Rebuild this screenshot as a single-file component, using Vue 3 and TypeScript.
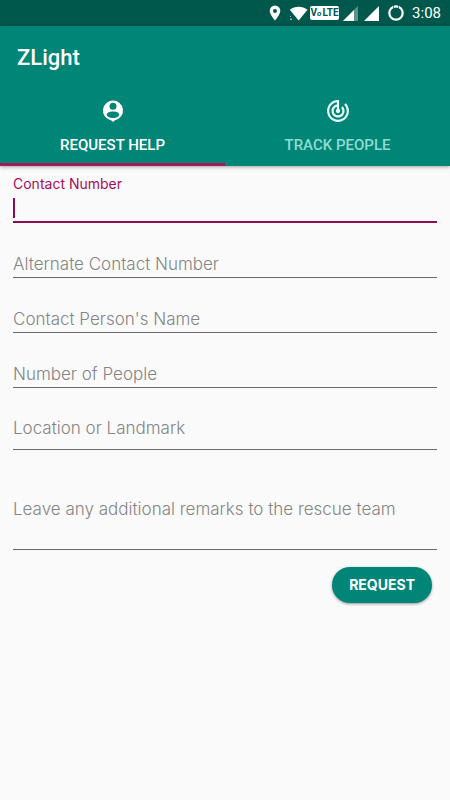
<script setup lang="ts">
import { ref } from 'vue'

type FieldKind = 'line' | 'location' | 'remarks'

interface Field {
  id: string
  label: string
  kind: FieldKind
  type: string
}

const fields: Field[] = [
  { id: 'alternate', label: 'Alternate Contact Number', kind: 'line', type: 'tel' },
  { id: 'name', label: "Contact Person's Name", kind: 'line', type: 'text' },
  { id: 'people', label: 'Number of People', kind: 'line', type: 'text' },
  { id: 'location', label: 'Location or Landmark', kind: 'location', type: 'text' },
  { id: 'remarks', label: 'Leave any additional remarks to the rescue team', kind: 'remarks', type: 'text' },
]

const contact = ref('')
const values = ref<Record<string, string>>({
  alternate: '',
  name: '',
  people: '',
  location: '',
  remarks: '',
})
</script>

<template>
  <div class="app">
    <div class="status">
      <svg class="pin" viewBox="0 0 12 16" width="12" height="16">
        <path fill="#fff" fill-rule="evenodd" d="M6 0.5a5.3 5.3 0 0 0-5.3 5.3C.7 9.600 6 15.500 6 15.500s5.300-5.900 5.300-9.700A5.300 5.300 0 0 0 6 .5zM6 3.900a2 2 0 1 1 0 4 2 2 0 0 1 0-4z" />
      </svg>
      <svg class="wifi" viewBox="0 0 19 15" width="19" height="15">
        <path fill="#fff" d="M.8 3.800C5.800-.2 13.500-.2 18.500 3.800L9.700 14.500z" />
        <path fill="#8fb8b2" d="M1 10h1v1H1zM1 12.500h2v1.500H1z" />
      </svg>
      <span class="volte">V<i>o</i>&#8202;LTE</span>
      <svg class="signal" viewBox="0 0 15 15" width="15" height="15">
        <path fill="#5d938b" d="M15 0v15H0z" />
        <path fill="#fff" d="M11 4v11H0z" />
      </svg>
      <svg class="signal-full" viewBox="0 0 15 15" width="15" height="15">
        <path fill="#fff" d="M15 0v15H0z" />
      </svg>
      <svg class="ring" viewBox="0 0 16 16" width="16" height="16">
        <circle cx="8" cy="8" r="6.700" fill="none" stroke="#fff" stroke-width="2.200" />
        <path d="M5.500 0v3.500M10.500 0v3.500" stroke="#00574b" stroke-width=".7" />
      </svg>
      <span class="clock">3:08</span>
    </div>

    <header class="bar">
      <h1 class="title">ZLight</h1>
      <nav class="tabs">
        <button class="tab active" type="button">
          <svg viewBox="0 0 24 24" width="24" height="24">
            <path fill="#fff" fill-rule="evenodd" d="M12 1.500a10 10 0 0 0-3 19.540c1.200.4 2.200.9 3 2.160.8-1.260 1.800-1.760 3-2.160A10 10 0 0 0 12 1.500zM12 3.700a3.500 3.500 0 1 1 0 7 3.500 3.500 0 0 1 0-7zM12 12.400c3.300 0 6.200 1.100 6.200 3.100 0 2-2.900 3.500-6.200 3.500s-6.200-1.500-6.200-3.500c0-2 2.900-3.100 6.200-3.100z" />
          </svg>
          <span>REQUEST HELP</span>
        </button>
        <button class="tab" type="button">
          <svg viewBox="1 1 22 22" width="24" height="24">
            <path fill="#e6fffb" d="M19.070 4.930l-1.410 1.410C19.100 7.790 20 9.790 20 12c0 4.420-3.580 8-8 8s-8-3.580-8-8c0-4.080 3.050-7.440 7-7.930v2.020C8.160 6.570 6 9.030 6 12c0 3.310 2.690 6 6 6s6-2.690 6-6c0-1.660-.67-3.160-1.760-4.240l-1.410 1.410C15.550 9.900 16 10.900 16 12c0 2.210-1.790 4-4 4s-4-1.790-4-4c0-1.860 1.280-3.410 3-3.860v2.140c-.6.350-1 .98-1 1.720 0 1.100.9 2 2 2s2-.9 2-2c0-.74-.4-1.380-1-1.720V2h-1C6.480 2 2 6.480 2 12s4.480 10 10 10 10-4.480 10-10c0-2.760-1.120-5.260-2.930-7.070z" />
          </svg>
          <span>TRACK PEOPLE</span>
        </button>
      </nav>
    </header>

    <form class="form" @submit.prevent>
      <div class="focused">
        <label for="contact">Contact Number</label>
        <input id="contact" v-model="contact" type="tel" :class="{ empty: !contact }" />
      </div>
      <div v-for="field in fields" :key="field.id" class="field" :class="field.kind">
        <label v-show="!values[field.id]" :for="field.id">{{ field.label }}</label>
        <textarea v-if="field.kind === 'remarks'" :id="field.id" v-model="values[field.id]"></textarea>
        <input v-else :id="field.id" v-model="values[field.id]" :type="field.type" />
      </div>
      <button class="submit" type="submit">REQUEST</button>
    </form>
  </div>
</template>

<style>
body {
  margin: 0;
  background: #fafafa;
}
</style>

<style scoped>
.app {
  min-height: 100vh;
  background: #fafafa;
  font-family: Inter, sans-serif;
}

.status {
  display: flex;
  align-items: center;
  justify-content: flex-end;
  height: 26px;
  padding-right: 9px;
  background: #00574b;
  color: #fff;
}

.wifi {
  margin-left: 8px;
}

.volte {
  box-sizing: border-box;
  width: 29px;
  height: 14px;
  margin-left: 2px;
  border-radius: 2px;
  background: #fff;
  color: #00574b;
  font: 700 10px/14px Roboto, sans-serif;
  text-align: center;
  white-space: nowrap;
}

.volte i {
  font-size: 8px;
}

.signal {
  margin-left: 4px;
}

.signal-full {
  margin-left: 6px;
}

.ring {
  margin-left: 9px;
}

.clock {
  margin-left: 8px;
  font: 400 15px/26px Roboto, sans-serif;
}

.bar {
  position: relative;
  background: #008577;
  box-shadow: 0 1px 4px rgba(0, 0, 0, 0.35);
}

.title {
  margin: 0;
  padding: 0 17px;
  color: #fff;
  font: 500 22px/64px Roboto, sans-serif;
}

.tabs {
  display: grid;
  grid-template-columns: 1fr 1fr;
}

.tab {
  display: flex;
  flex-direction: column;
  align-items: center;
  gap: 10px;
  height: 76px;
  padding: 9px 0 0;
  border: 0;
  border-bottom: 3px solid transparent;
  background: none;
  color: #8fdcd2;
  font: 500 15px/24px Roboto, sans-serif;
}

.tab.active {
  border-bottom-color: #a21b5b;
  color: #fff;
}

.form {
  display: flex;
  flex-direction: column;
  padding: 8px 13px;
}

.focused {
  display: flex;
  flex-direction: column;
}

.focused label {
  color: #a3105a;
  font-size: 14px;
  font-weight: 400;
  line-height: 20px;
}

input,
textarea {
  box-sizing: border-box;
  width: 100%;
  margin: 0;
  padding: 0;
  border: 0;
  border-radius: 0;
  outline: 0;
  background: transparent;
  color: #222;
  font: 300 17px/24px Inter, sans-serif;
  resize: none;
}

.focused input {
  height: 29px;
  border-bottom: 2px solid #8c0e50;
}

.focused input.empty {
  background: linear-gradient(#8c0e50, #8c0e50) 0 4px / 2px 20px no-repeat;
}

.field {
  display: grid;
  align-items: end;
}

.field label,
.field input,
.field textarea {
  grid-area: 1 / 1;
}

.field label {
  padding-bottom: 2px;
  color: #858585;
  font-size: 17px;
  font-weight: 300;
  line-height: 24px;
}

.field input,
.field textarea {
  height: 40px;
  border-bottom: 1px solid #6a6a6a;
}

.line {
  height: 55px;
}

.location {
  height: 62px;
}

.location label {
  padding-bottom: 10px;
}

.remarks {
  height: 100px;
}

.remarks label {
  padding-bottom: 29px;
}

.remarks textarea {
  height: 80px;
}

.submit {
  align-self: flex-end;
  height: 36px;
  margin: 17px 5px 0 0;
  padding: 0 17px;
  border: 0;
  border-radius: 18px;
  background: #008577;
  box-shadow: 0 1px 3px rgba(0, 0, 0, 0.4);
  color: #fff;
  font: 700 14px/36px Inter, sans-serif;
}
</style>
